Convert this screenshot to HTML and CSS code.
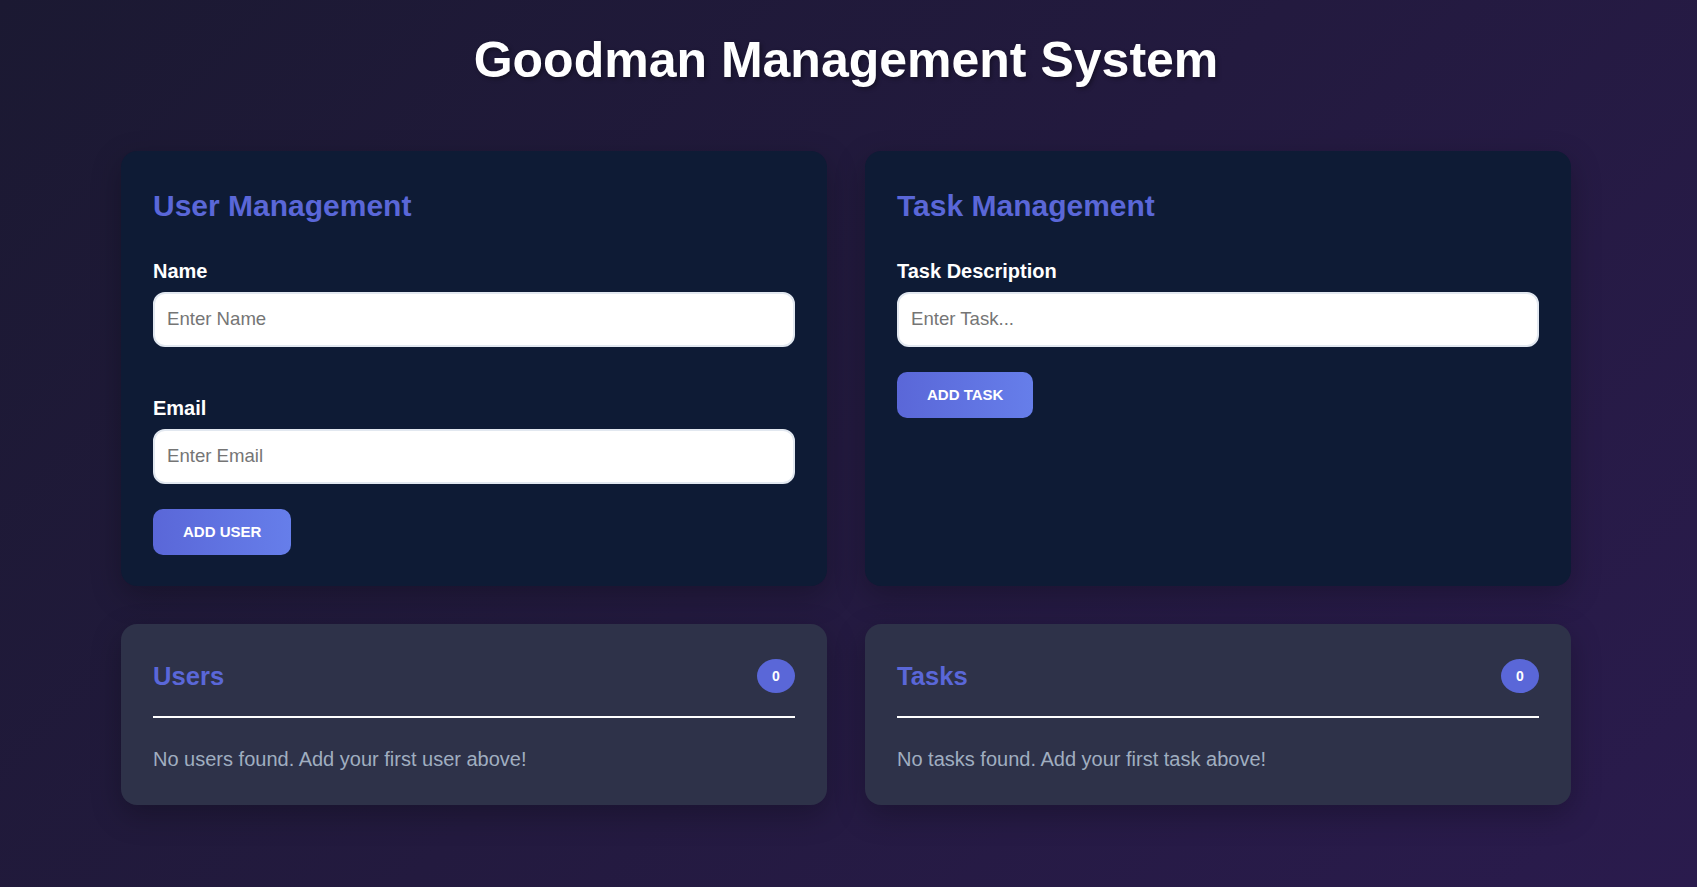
FILE: index.html
```html
<!DOCTYPE html>
<html lang="en">
<head>
<meta charset="utf-8">
<title>Goodman Management System</title>
<link rel="stylesheet" href="styles.css">
</head>
<body>
<div class="page">
  <h1 class="title">Goodman Management System</h1>
  <div class="grid">
    <section class="card form-card">
      <h2 class="card-title">User Management</h2>
      <div class="group group-first">
        <label class="label" for="name">Name</label>
        <input class="input" id="name" type="text" placeholder="Enter Name">
      </div>
      <div class="group group-last">
        <label class="label" for="email">Email</label>
        <input class="input" id="email" type="email" placeholder="Enter Email">
      </div>
      <button class="btn" type="button">Add User</button>
    </section>
    <section class="card form-card">
      <h2 class="card-title">Task Management</h2>
      <div class="group group-last">
        <label class="label" for="task">Task Description</label>
        <input class="input" id="task" type="text" placeholder="Enter Task...">
      </div>
      <button class="btn" type="button">Add Task</button>
    </section>
    <section class="card list-card">
      <div class="list-head">
        <h3 class="list-title">Users</h3>
        <span class="badge">0</span>
      </div>
      <p class="empty">No users found. Add your first user above!</p>
    </section>
    <section class="card list-card">
      <div class="list-head">
        <h3 class="list-title">Tasks</h3>
        <span class="badge">0</span>
      </div>
      <p class="empty">No tasks found. Add your first task above!</p>
    </section>
  </div>
</div>
</body>
</html>
```
FILE: styles.css
```css
* { box-sizing: border-box; }

html, body {
  margin: 0;
  padding: 0;
}

body {
  min-height: 887px;
  font-family: "Liberation Sans", Arial, sans-serif;
  background: linear-gradient(135deg, #1b1932 0%, #231a3f 50%, #2a1b4d 100%);
  color: #ffffff;
}

.page {
  padding: 32px 126px 40px 121px;
}

.title {
  margin: 0 0 61px;
  font-size: 50px;
  line-height: 57.5px;
  font-weight: 700;
  text-align: center;
  color: #ffffff;
  text-shadow: 2px 2px 4px rgba(0, 0, 0, 0.35);
}

.grid {
  display: grid;
  grid-template-columns: 1fr 1fr;
  gap: 38px;
}

.card {
  border-radius: 16px;
  box-shadow: 0 10px 30px rgba(0, 0, 0, 0.25);
}

.form-card {
  background: #0e1b35;
  padding: 32px 32px 31px;
}

.card-title {
  margin: 5px 0 36px;
  font-size: 30px;
  line-height: 36px;
  font-weight: 700;
  color: #5a67d8;
}

.group-first { margin-bottom: 50px; }
.group-last { margin-bottom: 25px; }

.label {
  display: block;
  font-size: 20px;
  line-height: 23px;
  font-weight: 700;
  color: #ffffff;
  margin-bottom: 9px;
}

.input {
  display: block;
  width: 100%;
  height: 55px;
  padding: 0 12px;
  border: 2px solid #e2e8f0;
  border-radius: 12px;
  background: #ffffff;
  font-family: "Liberation Sans", Arial, sans-serif;
  font-size: 18.6px;
  color: #333333;
  outline: none;
}

.input::placeholder {
  color: #757575;
}

.btn {
  display: block;
  height: 46px;
  padding: 0 30px;
  border: none;
  border-radius: 10px;
  background: linear-gradient(90deg, #5a67d8 0%, #667eea 100%);
  color: #ffffff;
  font-family: "Liberation Sans", Arial, sans-serif;
  font-size: 15px;
  font-weight: 700;
  text-transform: uppercase;
  cursor: pointer;
}

.list-card {
  background: #2e3249;
  padding: 35px 32px 34px;
}

.list-head {
  display: flex;
  align-items: center;
  justify-content: space-between;
  height: 59px;
  padding-bottom: 23px;
  border-bottom: 2px solid #ffffff;
}

.list-title {
  margin: 0;
  font-size: 25.6px;
  line-height: 30px;
  font-weight: 700;
  color: #5a67d8;
}

.badge {
  display: flex;
  align-items: center;
  justify-content: center;
  width: 38px;
  height: 34px;
  border-radius: 50%;
  background: #5a67d8;
  color: #ffffff;
  font-size: 14px;
  font-weight: 700;
}

.empty {
  margin: 30px 0 0;
  font-size: 20px;
  line-height: 23px;
  color: #a0aec0;
}
```
